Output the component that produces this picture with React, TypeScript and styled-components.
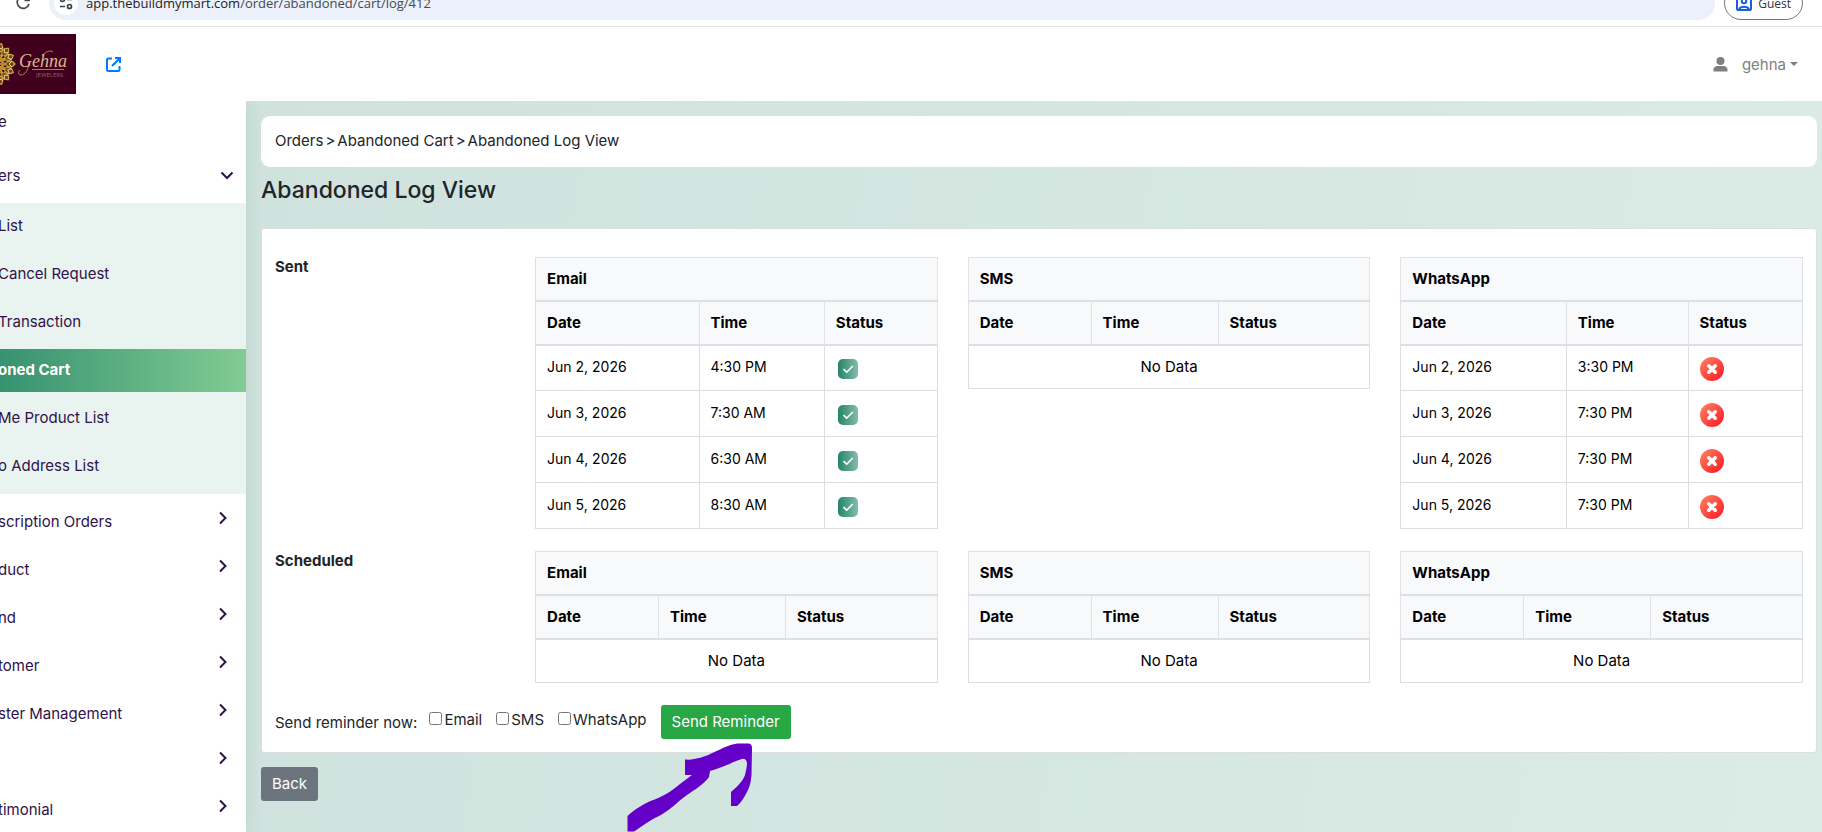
import React from "react";
import styled, { createGlobalStyle } from "styled-components";

const GlobalStyle = createGlobalStyle`
  *, *::before, *::after { box-sizing: border-box; }
  body {
    margin: 0;
    font-family: Inter, "Open Sans", sans-serif;
    font-size: 15px;
    line-height: 21px;
    color: #212529;
    background: #fff;
  }
  button, input { font: inherit; }
  a { color: inherit; text-decoration: none; }
`;

const Page = styled.div`
  display: flex;
  flex-direction: column;
  height: 100vh;
  overflow: hidden;
`;

/* Browser strip */
const BrowserBar = styled.div`
  display: flex;
  align-items: flex-end;
  flex: none;
  height: 27px;
  padding: 0 19px 6px 16px;
  border-bottom: 1px solid #dedfe1;
  overflow: hidden;
  font-family: "Open Sans", "Noto Sans", sans-serif;
`;

const BarButton = styled.button`
  display: flex;
  flex: none;
  width: 33px;
  height: 34px;
  padding: 9px 0 0;
  border: 0;
  background: none;
`;

const Address = styled.div`
  display: flex;
  align-items: center;
  flex: 1;
  gap: 8px;
  height: 34px;
  padding-left: 5px;
  border-radius: 17px;
  background: #ebf0fa;
  color: #474a4f;
  font-size: 13px;
`;

const SiteInfo = styled.span`
  display: grid;
  place-items: center;
  width: 24px;
  height: 24px;
  border-radius: 50%;
  background: #fff;
`;

const Host = styled.span`
  color: #1f2023;
`;

const Guest = styled.button`
  display: flex;
  align-items: center;
  gap: 6px;
  flex: none;
  height: 34px;
  margin-left: 9px;
  padding: 0 11px;
  border: 1px solid #75777b;
  border-radius: 17px;
  background: #fff;
  color: #333;
  font-size: 12px;
`;

/* Site header */
const Header = styled.header`
  position: relative;
  z-index: 2;
  display: flex;
  align-items: center;
  flex: none;
  height: 74px;
  padding-right: 24px;
  background: #fff;
`;

const Logo = styled.svg`
  display: block;
  width: 76px;
  height: 60px;
  margin-right: 29px;
`;

const StoreLink = styled.a`
  display: flex;
  margin-right: auto;
  color: #007bff;
`;

const Account = styled.button`
  display: flex;
  align-items: center;
  padding: 0;
  border: 0;
  background: none;
  color: #7f7f7f;
`;

const AccountName = styled.span`
  margin: 0 4px 0 14px;
`;

const Caret = styled.span`
  border: 4px solid transparent;
  border-top-color: currentColor;
  border-bottom: 0;
`;

/* Sidebar */
const Body = styled.div`
  display: flex;
  flex: 1;
  min-height: 0;
`;

const Sidebar = styled.nav`
  position: relative;
  z-index: 1;
  flex: none;
  width: 246px;
  overflow: hidden;
  color: #2f1249;
  box-shadow: 0 0 15px rgba(60, 110, 100, 0.14);
`;

const MenuGroup = styled.div`
  display: flex;
  flex-direction: column;
  gap: 5px;
`;

const TopGroup = styled(MenuGroup)`
  gap: 11px;
  padding-bottom: 5px;
`;

const SubMenu = styled(MenuGroup)`
  padding: 2px 0 6px;
  background: #e9f3f0;
`;

const LowerGroup = styled(MenuGroup)`
  padding-top: 7px;
`;

const MenuLink = styled.a<{ $active?: boolean }>`
  display: flex;
  align-items: center;
  justify-content: space-between;
  height: 43px;
  padding: 0 12px 2px 0;
  white-space: nowrap;
  font-weight: ${(p) => (p.$active ? 700 : 400)};
  color: ${(p) => (p.$active ? "#fff" : "inherit")};
  background: ${(p) => (p.$active ? "linear-gradient(90deg, #369270, #82cc94)" : "none")};
`;

const MenuText = styled.span`
  margin-left: -2px;
`;

const SideChevron = styled.svg`
  width: 14px;
  height: 14px;
  margin: 0 4px 8px auto;
`;

/* Content */
const Main = styled.main`
  flex: 1;
  min-width: 0;
  padding: 15px 5px 0 15px;
  background: linear-gradient(100deg, #cfe2dd, #dbebe5);
`;

const Breadcrumb = styled.nav`
  display: flex;
  align-items: center;
  gap: 2px;
  height: 51px;
  padding: 0 14px 2px;
  border-radius: 9px;
  background: #fff;
`;

const Title = styled.h1`
  margin: 9px 0 24px;
  font-size: 23px;
  line-height: 28px;
  font-weight: 500;
`;

const Card = styled.section`
  padding: 28px 13px 13px;
  border: 1px solid #dbdfe0;
  border-radius: 3px;
  background: #fff;
`;

const LogRow = styled.div`
  display: grid;
  grid-template-columns: minmax(0, 4fr) repeat(3, minmax(0, 7fr));
  gap: 30px;
  align-items: start;
  margin-bottom: 22px;
`;

const RowLabel = styled.h2`
  margin: 0;
  font-size: 15px;
  line-height: 20px;
  font-weight: 700;
`;

const Table = styled.table`
  width: 100%;
  table-layout: fixed;
  border-collapse: collapse;
  border: 1px solid #dee2e6;
  color: #000;
`;

const Col = styled.col<{ $share: number }>`
  width: ${(p) => p.$share}%;
`;

const Th = styled.th`
  height: 44px;
  padding: 0 11px;
  border: 1px solid #dee2e6;
  border-bottom: 2px solid #dee0e6;
  background: #f8f9fb;
  text-align: left;
  font-weight: 700;
`;

const GroupTh = styled(Th)`
  height: 43px;
`;

const Td = styled.td`
  height: 46px;
  padding: 0 11px 2px;
  border: 1px solid #dcdee0;
  font-size: 14px;
`;

const StatusTd = styled(Td)`
  padding: 2px 11px 0;
`;

const EmptyTd = styled(Td)`
  height: 44px;
  padding: 0 11px;
  font-size: 15px;
  text-align: center;
`;

const StatusIcon = styled.svg`
  display: block;
  width: 24px;
  height: 24px;
`;

const ReminderForm = styled.form`
  display: flex;
  align-items: center;
  height: 34px;
`;

const Choice = styled.label`
  display: flex;
  align-items: center;
  gap: 2px;
  margin-right: 14px;
  padding-bottom: 6px;
`;

const Tick = styled.input`
  width: 13px;
  height: 13px;
  margin: 0 0 2px;
`;

const Prompt = styled.span`
  margin-right: 12px;
`;

const Button = styled.button<{ $tone: string }>`
  display: block;
  height: 34px;
  padding: 0 11px 2px;
  border: 0;
  border-radius: 3px;
  background: ${(p) => p.$tone};
  color: #fff;
`;

const Pointed = styled.div`
  position: relative;
`;

const Arrow = styled.svg`
  position: absolute;
  left: -34px;
  top: 38px;
  width: 126px;
  height: 89px;
  pointer-events: none;
`;

const Footer = styled.div`
  padding-top: 14px;
`;

type Entry = [string, string];
type Log = { name: string; shares: number[]; ok?: boolean; entries: Entry[] };

const EMPTY = [30.6, 31.6, 37.8];

const sent: Log[] = [
  {
    name: "Email", shares: [40.7, 31.2, 28.1], ok: true,
    entries: [["Jun 2, 2026", "4:30 PM"], ["Jun 3, 2026", "7:30 AM"], ["Jun 4, 2026", "6:30 AM"], ["Jun 5, 2026", "8:30 AM"]],
  },
  { name: "SMS", shares: EMPTY, entries: [] },
  {
    name: "WhatsApp", shares: [41.2, 30.3, 28.5], ok: false,
    entries: [["Jun 2, 2026", "3:30 PM"], ["Jun 3, 2026", "7:30 PM"], ["Jun 4, 2026", "7:30 PM"], ["Jun 5, 2026", "7:30 PM"]],
  },
];

const scheduled: Log[] = ["Email", "SMS", "WhatsApp"].map((name) => ({ name, shares: EMPTY, entries: [] }));

const subItems = ["List", "Cancel Request", "Transaction", "oned Cart", "Me Product List", "o Address List"];
const lowerItems = ["scription Orders", "duct", "nd", "tomer", "ster Management", "", "timonial"];

function Status({ ok }: { ok?: boolean }) {
  return ok ? (
    <StatusIcon viewBox="0 0 24 24" role="img">
      <rect x="2" y="2" width="20" height="20" rx="5" fill="url(#sentFill)" />
      <path d="M7.5 12.2 10.7 15.2 16.8 9" fill="none" stroke="#fff" strokeWidth="1.6" />
    </StatusIcon>
  ) : (
    <StatusIcon viewBox="0 0 24 24" role="img">
      <circle cx="12" cy="12" r="12" fill="url(#failFill)" />
      <path d="M8.8 8.8 15.2 15.2M15.2 8.8 8.8 15.2" stroke="#fff" strokeWidth="3.6" strokeLinecap="round" />
    </StatusIcon>
  );
}

function LogTable({ log }: { log: Log }) {
  return (
    <Table>
      <colgroup>
        {log.shares.map((s, i) => <Col key={i} $share={s} />)}
      </colgroup>
      <thead>
        <tr><GroupTh colSpan={3}>{log.name}</GroupTh></tr>
        <tr><Th>Date</Th><Th>Time</Th><Th>Status</Th></tr>
      </thead>
      <tbody>
        {log.entries.length === 0 && <tr><EmptyTd colSpan={3}>No Data</EmptyTd></tr>}
        {log.entries.map(([date, time]) => (
          <tr key={date}>
            <Td>{date}</Td>
            <Td>{time}</Td>
            <StatusTd><Status ok={log.ok} /></StatusTd>
          </tr>
        ))}
      </tbody>
    </Table>
  );
}

const HiddenDefs = styled.svg`
  position: absolute;
  width: 0;
  height: 0;
`;

function Gradients() {
  return (
    <HiddenDefs>
      <defs>
        <linearGradient id="sentFill"><stop offset="0" stopColor="#238468" /><stop offset="1" stopColor="#86bcae" /></linearGradient>
        <linearGradient id="failFill" x1="0" y1="0" x2="1" y2="1"><stop offset="0.1" stopColor="#ff7a5e" /><stop offset="0.9" stopColor="#fb2029" /></linearGradient>
      </defs>
    </HiddenDefs>
  );
}

function BrandLogo() {
  const petals = Array.from({ length: 16 }, (_, i) => i * 22.5);
  return (
    <Logo viewBox="0 0 76 60">
      <rect width="76" height="60" fill="#40001d" />
      <g transform="translate(-7 30)" fill="none" stroke="#c9a040">
        {petals.map((a) => (
          <g key={a} transform={`rotate(${a})`}>
            <path d="M0 -12C-4 -15 -4 -19 0 -22C4 -19 4 -15 0 -12Z" fill="#6b4412" strokeWidth="1.3" />
            <path d="M0 -7C-2 -9 -2 -11 0 -13C2 -11 2 -9 0 -7Z" fill="#b8860f" strokeWidth="1" />
            <path d="M-3 -19 0 -16 3 -19" stroke="#ecd58f" strokeWidth="1" />
          </g>
        ))}
        <circle r="14" stroke="#8a6a1c" />
      </g>
      <text x="19" y="33" fill="#dbb98c" fontFamily="Liberation Serif, serif" fontStyle="italic" fontSize="18">Gehna</text>
      <path d="M20 36C18 38 18 41 21 41C25 41 28 36 29 30M42 22C46 17 51 16 53 18M32 35.500H64" fill="none" stroke="#c7a077" strokeWidth="0.8" />
      <text x="36" y="43" fill="#94645c" fontFamily="Open Sans, sans-serif" fontSize="6">JEWELERS</text>
    </Logo>
  );
}

export default function App() {
  return (
    <Page>
      <GlobalStyle />
      <Gradients />
      <BrowserBar>
        <BarButton aria-label="Reload">
          <svg width="15" height="15" viewBox="0 0 15 15" fill="none" stroke="#46484b" strokeWidth="1.7">
            <path d="M12.500 4.500A6 6 0 1 0 13 9M13 1V5.500H8.500" />
          </svg>
        </BarButton>
        <Address>
          <SiteInfo>
            <svg width="14" height="14" viewBox="0 0 14 14" fill="none" stroke="#3d3f43" strokeWidth="1.7">
              <circle cx="3.500" cy="3.500" r="2" /><path d="M8 3.500H13M1 10.500H6" /><circle cx="10.500" cy="10.500" r="2" />
            </svg>
          </SiteInfo>
          <span><Host>app.thebuildmymart.com</Host>/order/abandoned/cart/log/412</span>
        </Address>
        <Guest>
          <svg width="16" height="16" viewBox="0 0 16 16" fill="none" stroke="#1a5fd8" strokeWidth="2">
            <rect x="1" y="1" width="14" height="14" rx="1" /><circle cx="8" cy="6" r="2.200" /><path d="M3 14C5 11 11 11 13 14" />
          </svg>
          Guest
        </Guest>
      </BrowserBar>

      <Header>
        <BrandLogo />
        <StoreLink href="#" aria-label="Open store">
          <svg width="17" height="17" viewBox="0 0 17 17" fill="none" stroke="currentColor" strokeWidth="2">
            <path d="M7 2.500H3.500A1.500 1.500 0 0 0 2 4V13.500A1.500 1.500 0 0 0 3.500 15H13A1.500 1.500 0 0 0 14.500 13.500V10M10 2H15V7M14.500 2.500 7 10" />
          </svg>
        </StoreLink>
        <Account>
          <svg width="15" height="15" viewBox="0 0 15 15" fill="currentColor">
            <circle cx="7.500" cy="4" r="4" /><path d="M0.500 14.500V12.500C0.500 10.500 2.500 9 4.500 9H10.500C12.500 9 14.500 10.500 14.500 12.500V14.500Z" />
          </svg>
          <AccountName>gehna</AccountName>
          <Caret />
        </Account>
      </Header>

      <Body>
        <Sidebar>
          <TopGroup>
            <MenuLink href="#"><MenuText>e</MenuText></MenuLink>
            <MenuLink href="#">
              <MenuText>ers</MenuText>
              <svg width="14" height="9" viewBox="0 0 14 9" fill="none" stroke="currentColor" strokeWidth="2"><path d="M1.500 1.500 7 7 12.500 1.500" /></svg>
            </MenuLink>
          </TopGroup>
          <SubMenu>
            {subItems.map((t, i) => (
              <MenuLink key={t} href="#" $active={i === 3}><MenuText>{t}</MenuText></MenuLink>
            ))}
          </SubMenu>
          <LowerGroup>
            {lowerItems.map((t, i) => (
              <MenuLink key={i} href="#">
                <MenuText>{t}</MenuText>
                <SideChevron viewBox="0 0 14 14" fill="none" stroke="currentColor" strokeWidth="2"><path d="M4 1.500 9.500 7 4 12.500" /></SideChevron>
              </MenuLink>
            ))}
          </LowerGroup>
        </Sidebar>

        <Main>
          <Breadcrumb>
            <a href="#">Orders</a><span>&gt;</span><a href="#">Abandoned Cart</a><span>&gt;</span><span>Abandoned Log View</span>
          </Breadcrumb>
          <Title>Abandoned Log View</Title>
          <Card>
            <LogRow>
              <RowLabel>Sent</RowLabel>
              {sent.map((l) => <LogTable key={l.name} log={l} />)}
            </LogRow>
            <LogRow>
              <RowLabel>Scheduled</RowLabel>
              {scheduled.map((l) => <LogTable key={l.name} log={l} />)}
            </LogRow>
            <ReminderForm onSubmit={(e) => e.preventDefault()}>
              <Prompt>Send reminder now:</Prompt>
              {["Email", "SMS", "WhatsApp"].map((c) => (
                <Choice key={c}><Tick type="checkbox" />{c}</Choice>
              ))}
              <Pointed>
                <Button type="submit" $tone="#28a745">Send Reminder</Button>
                <Arrow viewBox="626 743 126 89" fill="#6400c8">
                  <path d="M626.500 816C634 809 641 805 649.500 801C661 797 671 791 679 784L691 775H684V759.500C690 760 694 759 698 758C706 756 711 753 718 750C726 746 732 743.500 739 743.500H748Q751 744 751 748L750.500 775C750 781 749 786 747 790C744 796 740 803 736 806H730V792C735 788 742 781 744 775C745 770 746 767 746 763Q745 758 741 759C731 762 721 768 709 771L708 777C701 786 693 790 686 795C675 803 667 812 656 817C649 820 640 827 633 831.500H626.500Z" />
                </Arrow>
              </Pointed>
            </ReminderForm>
          </Card>
          <Footer><Button type="button" $tone="#6c757d">Back</Button></Footer>
        </Main>
      </Body>
    </Page>
  );
}
